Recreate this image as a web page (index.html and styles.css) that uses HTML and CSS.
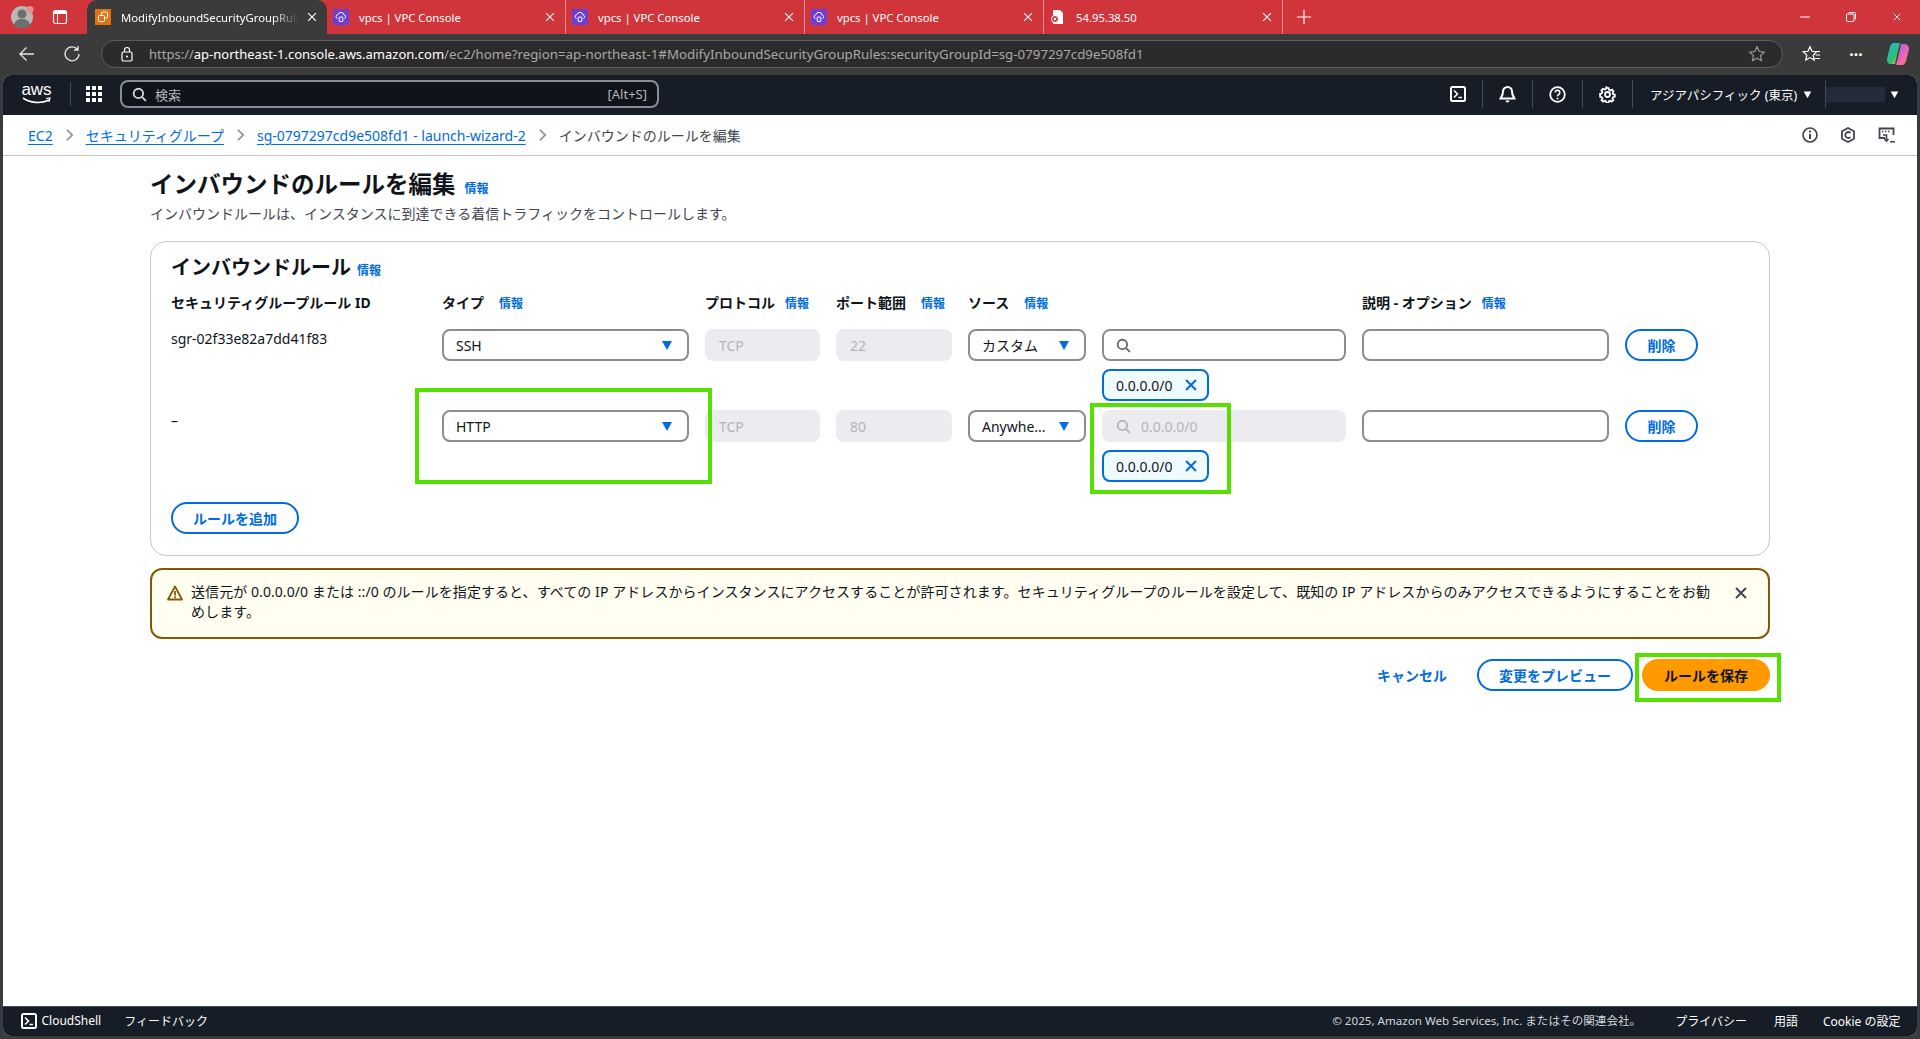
FILE: index.html
```html
<!DOCTYPE html>
<html lang="ja">
  <head>
    <meta charset="UTF-8" />
    <meta name="viewport" content="width=device-width, initial-scale=1.0" />
    <title>ModifyInboundSecurityGroupRules</title>
    <link rel="stylesheet" href="styles.css">
  </head>
  <body>
    <svg class="icon-defs" width="0" height="0">
      <symbol id="i-close" viewBox="0 0 16 16"><path d="M3 3l10 10M13 3L3 13" fill="none" stroke="currentColor" stroke-width="2"/></symbol>
      <symbol id="i-thin-close" viewBox="0 0 16 16"><path d="M3.5 3.5l9 9M12.5 3.5l-9 9" fill="none" stroke="currentColor" stroke-width="1.2"/></symbol>
      <symbol id="i-search" viewBox="0 0 16 16"><circle cx="6.8" cy="6.8" r="5" fill="none" stroke="currentColor" stroke-width="2"/><path d="M10.5 10.5l4.3 4.3" fill="none" stroke="currentColor" stroke-width="2"/></symbol>
      <symbol id="i-caret" viewBox="0 0 12 12"><path d="M1 2h10L6 11z" fill="currentColor"/></symbol>
      <symbol id="i-chev" viewBox="0 0 10 16"><path d="M2 2l6 6-6 6" fill="none" stroke="currentColor" stroke-width="2"/></symbol>
      <symbol id="i-shell" viewBox="0 0 16 16"><rect x="1" y="1" width="14" height="14" rx="1.5" fill="none" stroke="currentColor" stroke-width="2"/><path d="M4 4.5L7.5 8 4 11.5M8.5 11.5H12" fill="none" stroke="currentColor" stroke-width="1.6"/></symbol>
      <symbol id="i-vpc" viewBox="0 0 16 16"><rect width="16" height="16" rx="1" fill="#6b3fd4"/><path d="M4.5 9.5a2 2 0 0 1 .4-3.9 3.2 3.2 0 0 1 6.2.4 1.8 1.8 0 0 1 .2 3.5" fill="none" stroke="#fff" stroke-width="1"/><rect x="6.2" y="8" width="3.6" height="4.5" rx=".5" fill="none" stroke="#fff" stroke-width="1"/></symbol>
    </svg>

    <div class="tabbar">
      <div class="profile">
        <svg width="24" height="24" viewBox="0 0 24 24"><circle cx="11" cy="12" r="11" fill="#b8b8b8"/><circle cx="11" cy="9" r="4.5" fill="#6e6e6e"/><path d="M3 20c1-5 5-6 8-6s7 1 8 6a11 11 0 0 1-16 0z" fill="#6e6e6e"/><circle cx="19" cy="4.5" r="3.5" fill="#e8908f"/></svg>
      </div>
      <div class="vtabs">
        <svg width="16" height="16" viewBox="0 0 16 16"><rect x="1.5" y="1.5" width="13" height="13" rx="2" fill="none" stroke="#fff" stroke-width="1.2"/><path d="M1.5 5h13V3.5a2 2 0 0 0-2-2h-9a2 2 0 0 0-2 2z" fill="#fff"/><path d="M5.5 5v9.5" stroke="#fff"/></svg>
      </div>
      <div class="tab tab-active">
        <svg class="favicon" width="16" height="16" viewBox="0 0 16 16"><rect width="16" height="16" fill="#e07314"/><rect x="6.5" y="3" width="6" height="6" rx="1" fill="none" stroke="#fff"/><rect x="3.5" y="6.5" width="6" height="6" rx="1" fill="#e07314" stroke="#fff"/></svg>
        <span class="tab-title tab-fade">ModifyInboundSecurityGroupRules</span>
        <svg class="tab-close" width="14" height="14"><use href="#i-thin-close"/></svg>
      </div>
      <div class="tab">
        <svg class="favicon" width="16" height="16"><use href="#i-vpc"/></svg>
        <span class="tab-title">vpcs | VPC Console</span>
        <svg class="tab-close" width="14" height="14"><use href="#i-thin-close"/></svg>
      </div>
      <div class="tab">
        <svg class="favicon" width="16" height="16"><use href="#i-vpc"/></svg>
        <span class="tab-title">vpcs | VPC Console</span>
        <svg class="tab-close" width="14" height="14"><use href="#i-thin-close"/></svg>
      </div>
      <div class="tab">
        <svg class="favicon" width="16" height="16"><use href="#i-vpc"/></svg>
        <span class="tab-title">vpcs | VPC Console</span>
        <svg class="tab-close" width="14" height="14"><use href="#i-thin-close"/></svg>
      </div>
      <div class="tab tab-last">
        <svg class="favicon" width="16" height="16" viewBox="0 0 16 16"><path d="M3 1h7l3 3v11H3z" fill="#fff"/><circle cx="5" cy="10" r="3.5" fill="#d0353b" stroke="#fff"/><path d="M3.8 8.8l2.4 2.4M6.2 8.8l-2.4 2.4" stroke="#fff"/></svg>
        <span class="tab-title">54.95.38.50</span>
        <svg class="tab-close" width="14" height="14"><use href="#i-thin-close"/></svg>
      </div>
      <svg class="new-tab" width="16" height="16" viewBox="0 0 16 16"><path d="M8 1v14M1 8h14" stroke="#fff" stroke-width="1.2"/></svg>
      <div class="win-controls">
        <svg width="12" height="12" viewBox="0 0 12 12"><path d="M1 6h10" stroke="#fff"/></svg>
        <svg width="12" height="12" viewBox="0 0 12 12"><rect x="1.5" y="3" width="7.5" height="7.5" rx="1" fill="none" stroke="#fff"/><path d="M3.5 1.5h6a1 1 0 0 1 1 1v6" fill="none" stroke="#fff"/></svg>
        <svg width="12" height="12"><use href="#i-thin-close" color="#fff"/></svg>
      </div>
    </div>

    <div class="toolbar">
      <svg class="tb-back" width="18" height="18" viewBox="0 0 18 18"><path d="M16 9H2M8.5 2.500L2 9l6.500 6.500" fill="none" stroke="#e6e6e6" stroke-width="1.300"/></svg>
      <svg class="tb-reload" width="18" height="18" viewBox="0 0 18 18"><path d="M14.500 4.500A7 7 0 1 0 16 9M15 1v4h-4" fill="none" stroke="#e6e6e6" stroke-width="1.300"/></svg>
      <div class="addressbar">
        <svg class="lock" width="14" height="16" viewBox="0 0 14 16"><rect x="2" y="6" width="10" height="9" rx="1.500" fill="none" stroke="#fff" stroke-width="1.200"/><path d="M4.500 6V4a2.500 2.500 0 0 1 5 0v2" fill="none" stroke="#fff" stroke-width="1.200"/><circle cx="7" cy="10.500" r="1" fill="#fff"/></svg>
        <div class="url"><span class="url-dim">https://</span><span class="url-host">ap-northeast-1.console.aws.amazon.com</span><span class="url-dim url-path">/ec2/home?region=ap-northeast-1#ModifyInboundSecurityGroupRules:securityGroupId=sg-0797297cd9e508fd1</span></div>
        <svg class="star" width="18" height="18" viewBox="0 0 18 18"><path d="M9 1.800l2.200 4.700 5 .6-3.700 3.500 1 5.100L9 13.200l-4.500 2.500 1-5.100L1.800 7.100l5-.6z" fill="none" stroke="#9a9a9a" stroke-width="1.200"/></svg>
      </div>
      <svg class="tb-fav" width="20" height="18" viewBox="0 0 20 18"><path d="M8 1.800l2 4.500 4.800.5-3.600 3.300 1 4.900L8 12.600l-4.200 2.400 1-4.900L1.200 6.800 6 6.300z" fill="none" stroke="#fff" stroke-width="1.200"/><path d="M13 6.500h5M13.500 10h4.500M12.500 13.500H18" stroke="#fff"/></svg>
      <span class="tb-dots">···</span>
      <svg class="tb-copilot" width="24" height="24" viewBox="0 0 24 24">
        <defs>
          <linearGradient id="cp1" x1="0" y1="0" x2="1" y2="1"><stop offset="0" stop-color="#1fb6e8"/><stop offset=".6" stop-color="#2fbf71"/><stop offset="1" stop-color="#f5c518"/></linearGradient>
          <linearGradient id="cp2" x1="0" y1="0" x2="1" y2="1"><stop offset="0" stop-color="#9b5cf0"/><stop offset=".6" stop-color="#f065b0"/><stop offset="1" stop-color="#ff8a3c"/></linearGradient>
        </defs>
        <path d="M8 1h6l-3 12-2 9H5C2 22 1 20 1 17l3-12c.5-2.500 2-4 4-4z" fill="url(#cp1)"/>
        <path d="M15 2h3c3 0 5 2 5 5l-3 12c-.5 2-2 4-4 4h-6l3-12z" fill="url(#cp2)"/>
      </svg>
    </div>

    <div class="console">
      <header class="awsbar">
        <div class="aws-logo">
          <span class="aws-word">aws</span>
          <svg width="30" height="8" viewBox="0 0 30 8"><path d="M1 1c7 5 18 6 26 2" fill="none" stroke="#fff" stroke-width="1.600"/><path d="M24 1.500l4-.5-1 4" fill="none" stroke="#fff" stroke-width="1.200"/></svg>
        </div>
        <span class="awsbar-sep"></span>
        <svg class="apps" width="16" height="16" viewBox="0 0 16 16" fill="#fff"><rect width="4" height="4"/><rect x="6" width="4" height="4"/><rect x="12" width="4" height="4"/><rect y="6" width="4" height="4"/><rect x="6" y="6" width="4" height="4"/><rect x="12" y="6" width="4" height="4"/><rect y="12" width="4" height="4"/><rect x="6" y="12" width="4" height="4"/><rect x="12" y="12" width="4" height="4"/></svg>
        <div class="aws-search">
          <svg width="15" height="15" color="#d1d5db"><use href="#i-search"/></svg>
          <span class="aws-search-text">検索</span>
          <span class="aws-search-key">[Alt+S]</span>
        </div>
        <div class="aws-right">
          <span class="aws-icon"><svg width="16" height="16"><use href="#i-shell"/></svg></span>
          <span class="aws-icon"><svg width="17" height="18" viewBox="0 0 17 18"><path d="M8.500 2a4.500 4.500 0 0 0-4.500 4.500c0 4-2 5.500-2.500 7h14c-.5-1.500-2.500-3-2.500-7A4.500 4.500 0 0 0 8.500 2z" fill="none" stroke="currentColor" stroke-width="2"/><path d="M6.500 15.500a2 2 0 0 0 4 0" fill="currentColor"/></svg></span>
          <span class="aws-icon"><svg width="17" height="17" viewBox="0 0 17 17"><circle cx="8.500" cy="8.500" r="7.300" fill="none" stroke="currentColor" stroke-width="1.800"/><path d="M6.200 6.500a2.300 2.300 0 1 1 3.500 2c-.9.500-1.200 1-1.200 1.800" fill="none" stroke="currentColor" stroke-width="1.600"/><circle cx="8.500" cy="12.500" r="1" fill="currentColor"/></svg></span>
          <span class="aws-icon"><svg width="17" height="17" viewBox="0 0 17 17"><path d="M8.500 1.200l1.300.1.500 2 1.600.7 1.800-1 1.700 1.900-1.100 1.700.6 1.600 2 .5-.1 2.400-2 .5-.7 1.600 1.100 1.700-1.800 1.700-1.700-1.100-1.600.7-.5 1.900H7.300l-.5-1.900-1.600-.7-1.700 1.100-1.800-1.700 1.100-1.700-.7-1.600-2-.5V7.700l2-.5.6-1.600-1.100-1.700 1.700-1.900 1.800 1 1.600-.7.500-2z" transform="translate(1 1) scale(.88)" fill="none" stroke="currentColor" stroke-width="2"/><circle cx="8.500" cy="8.500" r="2.500" fill="none" stroke="currentColor" stroke-width="1.800"/></svg></span>
          <span class="aws-region">アジアパシフィック (東京)<svg width="9" height="9" color="#fff"><use href="#i-caret"/></svg></span>
          <span class="aws-account"><span class="account-blur"></span><svg width="9" height="9" color="#fff"><use href="#i-caret"/></svg></span>
        </div>
      </header>

      <nav class="crumbs">
        <a class="crumb-link">EC2</a>
        <svg class="crumb-chev" width="9" height="14"><use href="#i-chev"/></svg>
        <a class="crumb-link">セキュリティグループ</a>
        <svg class="crumb-chev" width="9" height="14"><use href="#i-chev"/></svg>
        <a class="crumb-link">sg-0797297cd9e508fd1 - launch-wizard-2</a>
        <svg class="crumb-chev" width="9" height="14"><use href="#i-chev"/></svg>
        <span class="crumb-current">インバウンドのルールを編集</span>
        <div class="crumb-tools">
          <svg width="16" height="16" viewBox="0 0 16 16"><circle cx="8" cy="8" r="7" fill="none" stroke="currentColor" stroke-width="1.700"/><path d="M8 7v5" stroke="currentColor" stroke-width="2"/><rect x="7" y="3.500" width="2" height="2" fill="currentColor"/></svg>
          <svg width="16" height="16" viewBox="0 0 16 16"><path d="M8 1l6 3.300v7.400L8 15l-6-3.300V4.300z" fill="none" stroke="currentColor" stroke-width="1.800"/><path d="M10.500 6A3 3 0 1 0 10.500 10" fill="none" stroke="currentColor" stroke-width="1.800"/></svg>
          <svg width="18" height="16" viewBox="0 0 18 16"><path d="M7 11H1.500V1.500h14V8" fill="none" stroke="currentColor" stroke-width="1.800"/><path d="M4 4.500h1.500M7 4.500h1.500M10 4.500h1.500" stroke="currentColor" stroke-width="1.600"/><path d="M5 8h3.500v6M6.500 12l2 2 2-2M12 14.800h5" fill="none" stroke="currentColor" stroke-width="1.600"/></svg>
        </div>
      </nav>

      <main class="content">
        <div class="page-head">
          <h1 class="page-title">インバウンドのルールを編集<a class="info info-title">情報</a></h1>
          <p class="page-desc">インバウンドルールは、インスタンスに到達できる着信トラフィックをコントロールします。</p>
        </div>

        <section class="card">
          <h2 class="card-title">インバウンドルール<a class="info info-card">情報</a></h2>

          <div class="rule-grid rule-head">
            <div>セキュリティグループルール ID</div>
            <div>タイプ<a class="info info-wide">情報</a></div>
            <div>プロトコル<a class="info">情報</a></div>
            <div>ポート範囲<a class="info info-wide">情報</a></div>
            <div>ソース<a class="info info-wide">情報</a></div>
            <div></div>
            <div>説明 - オプション<a class="info">情報</a></div>
            <div></div>
          </div>

          <div class="rule-grid rule-row">
            <div class="rule-id">sgr-02f33e82a7dd41f83</div>
            <div class="select">SSH<svg width="12" height="12"><use href="#i-caret"/></svg></div>
            <div class="input input-off">TCP</div>
            <div class="input input-off">22</div>
            <div class="select select-src">カスタム<svg width="12" height="12"><use href="#i-caret"/></svg></div>
            <div class="cidr">
              <div class="input input-search"><svg width="15" height="15"><use href="#i-search"/></svg></div>
              <div class="chip">0.0.0.0/0<svg width="16" height="16"><use href="#i-close"/></svg></div>
            </div>
            <div class="input"></div>
            <button class="btn">削除</button>
          </div>

          <div class="rule-grid rule-row">
            <div class="rule-id rule-id-new">–</div>
            <div class="select">HTTP<svg width="12" height="12"><use href="#i-caret"/></svg></div>
            <div class="input input-off">TCP</div>
            <div class="input input-off">80</div>
            <div class="select select-src">Anywhe...<svg width="12" height="12"><use href="#i-caret"/></svg></div>
            <div class="cidr">
              <div class="input input-off input-search"><svg width="15" height="15"><use href="#i-search"/></svg>0.0.0.0/0</div>
              <div class="chip">0.0.0.0/0<svg width="16" height="16"><use href="#i-close"/></svg></div>
            </div>
            <div class="input"></div>
            <button class="btn">削除</button>
          </div>

          <button class="btn btn-add">ルールを追加</button>
        </section>

        <div class="alert">
          <svg class="alert-icon" width="16" height="16" viewBox="0 0 16 16"><path d="M8 1.500L15 14.500H1z" fill="none" stroke="#855900" stroke-width="1.800" stroke-linejoin="round"/><path d="M8 6v4.500" stroke="#855900" stroke-width="1.800"/><rect x="7.100" y="11.300" width="1.800" height="1.800" fill="#855900"/></svg>
          <p class="alert-text">送信元が 0.0.0.0/0 または ::/0 のルールを指定すると、すべての IP アドレスからインスタンスにアクセスすることが許可されます。セキュリティグループのルールを設定して、既知の IP アドレスからのみアクセスできるようにすることをお勧めします。</p>
          <svg class="alert-close" width="16" height="16"><use href="#i-close"/></svg>
        </div>

        <div class="actions">
          <a class="cancel">キャンセル</a>
          <button class="btn btn-preview">変更をプレビュー</button>
          <button class="btn btn-primary">ルールを保存</button>
        </div>
      </main>

      <footer class="awsfoot">
        <svg width="16" height="16" color="#fff"><use href="#i-shell"/></svg>
        <span class="foot-shell">CloudShell</span>
        <span class="foot-fb">フィードバック</span>
        <div class="foot-right">
          <span class="foot-copy">© 2025, Amazon Web Services, Inc. またはその関連会社。</span>
          <span class="foot-privacy">プライバシー</span>
          <span>用語</span>
          <span>Cookie の設定</span>
        </div>
      </footer>

      <!-- annotation boxes drawn over the screenshot -->
      <div class="mark mark-type"></div>
      <div class="mark mark-cidr"></div>
      <div class="mark mark-save"></div>
    </div>
  </body>
</html>
```

FILE: styles.css
```css
* {
  box-sizing: border-box;
}
html,
body {
  margin: 0;
  height: 100%;
}
body {
  width: 1920px;
  height: 1039px;
  overflow: hidden;
  display: flex;
  flex-direction: column;
  background-color: #3b3b3b;
  font-family: "Noto Sans", "Noto Sans CJK JP", sans-serif;
  font-size: 14px;
  color: #0f141a;
}
.icon-defs {
  position: absolute;
}
a {
  color: #006ce0;
}
button {
  font-family: inherit;
}

/* browser tabs */
.tabbar {
  height: 34px;
  flex: none;
  display: flex;
  align-items: center;
  background-color: #d0353b;
  color: #fff;
  font-size: 11.3px;
}
.profile {
  width: 44px;
  padding-left: 11px;
  display: flex;
}
.vtabs {
  width: 43px;
  padding-left: 8px;
  display: flex;
}
.tab {
  width: 239px;
  height: 34px;
  padding: 0 8px 0 6px;
  display: flex;
  align-items: center;
  border-right: 1px solid #e58a8d;
}
.tab-active {
  width: 240px;
  padding-left: 8px;
  background-color: #3b3b3b;
  border-right: none;
  border-radius: 10px 10px 0 0;
}
.tab-last {
  border-right: 1px solid #e58a8d;
}
.favicon {
  flex: none;
}
.tab-title {
  flex: 1;
  margin-left: 10px;
  white-space: nowrap;
  overflow: hidden;
}
.tab-fade {
  -webkit-mask-image: linear-gradient(to right, #000 85%, transparent 100%);
  mask-image: linear-gradient(to right, #000 85%, transparent 100%);
}
.tab-close {
  flex: none;
  margin-left: 6px;
}
.new-tab {
  margin-left: 13px;
}
.win-controls {
  margin-left: auto;
  padding-right: 17px;
  display: flex;
  gap: 34px;
}

/* browser toolbar */
.toolbar {
  height: 41px;
  flex: none;
  padding-bottom: 2px;
  display: flex;
  align-items: center;
}
.tb-back {
  margin-left: 18px;
}
.tb-reload {
  margin-left: 27px;
}
.addressbar {
  width: 1682px;
  height: 28px;
  margin-left: 20px;
  padding: 0 16px 0 18px;
  display: flex;
  align-items: center;
  background-color: #2b2b2b;
  border: 1px solid #5c5c5c;
  border-radius: 14px;
}
.url {
  flex: 1;
  margin-left: 15px;
  font-size: 13px;
  white-space: nowrap;
  overflow: hidden;
}
.url-dim {
  color: #a8a8a8;
}
.url-path {
  font-size: 13.3px;
}
.url-host {
  color: #fff;
}
.tb-fav {
  margin-left: 19px;
}
.tb-dots {
  margin-left: 24px;
  width: 20px;
  color: #fff;
  font-size: 16px;
  font-weight: bold;
  text-align: center;
}
.tb-copilot {
  margin-left: 20px;
}

/* aws console */
.console {
  flex: 1;
  margin: 0 3px 3px;
  display: flex;
  flex-direction: column;
  position: relative;
  background-color: #fff;
  border-radius: 8px;
  overflow: hidden;
}
.awsbar {
  height: 40px;
  flex: none;
  padding: 0 0 2px 18px;
  display: flex;
  align-items: center;
  background-color: #161d26;
  color: #fff;
}
.aws-logo {
  width: 31px;
  display: flex;
  flex-direction: column;
  align-items: center;
}
.aws-word {
  height: 13px;
  font-family: "Liberation Sans", sans-serif;
  font-size: 17px;
  line-height: 12px;
}
.awsbar-sep {
  width: 1px;
  height: 24px;
  margin-left: 18px;
  background-color: #414d5c;
}
.apps {
  margin-left: 15px;
}
.aws-search {
  width: 539px;
  height: 28px;
  margin-left: 18px;
  padding: 0 10px;
  display: flex;
  align-items: center;
  background-color: #0f141a;
  border: 2px solid #8c8c94;
  border-radius: 8px;
  font-size: 13px;
  color: #b4b4bb;
}
.aws-search-text {
  margin-left: 8px;
}
.aws-search-key {
  margin-left: auto;
}
.aws-right {
  margin-left: auto;
  padding-right: 10px;
  display: flex;
  align-items: center;
  height: 100%;
}
.aws-icon {
  width: 50px;
  height: 28px;
  display: flex;
  align-items: center;
  justify-content: center;
  border-right: 1px solid #414d5c;
}
.aws-region {
  width: 193px;
  height: 28px;
  padding-left: 17px;
  display: flex;
  align-items: center;
  gap: 6px;
  border-right: 1px solid #414d5c;
  font-size: 12.5px;
  white-space: nowrap;
}
.aws-account {
  width: 81px;
  display: flex;
  align-items: center;
  gap: 5px;
}
.account-blur {
  width: 59px;
  height: 15px;
  background-color: #232c38;
}
.crumbs {
  height: 41px;
  flex: none;
  padding: 0 21px 0 25px;
  display: flex;
  align-items: center;
  gap: 10px;
  border-bottom: 1px solid #c6c6cd;
}
.crumb-link {
  text-decoration: underline;
  text-underline-offset: 3px;
}
.crumb-chev {
  color: #8c8c94;
  margin: 0 2px;
}
.crumb-current {
  color: #424650;
}
.crumb-tools {
  margin-left: auto;
  display: flex;
  align-items: center;
  gap: 22px;
  color: #424650;
}

/* page content */
.content {
  flex: 1;
  width: 1767px;
  padding-left: 147px;
}
.page-head {
  padding-top: 13px;
}
.page-title {
  margin: 0;
  font-size: 23.5px;
  line-height: 30px;
  font-weight: bold;
}
.page-desc {
  margin: 0;
  line-height: 20px;
  color: #424650;
}
.info {
  font-size: 12px;
  font-weight: bold;
  margin-left: 10px;
}
.info-title {
  margin-left: 9px;
}
.info-card {
  margin-left: 6px;
}
.info-wide {
  margin-left: 15px;
}
.card {
  margin-top: 17px;
  padding: 14px 19px 21px 20px;
  border: 1px solid #c6c6cd;
  border-radius: 16px;
}
.card-title {
  margin: 0;
  font-size: 20px;
  line-height: 24px;
  font-weight: bold;
}
.rule-grid {
  display: grid;
  grid-template-columns: 255px 247px 115px 116px 118px 244px 247px 73px;
  column-gap: 16px;
}
.rule-head {
  margin-top: 10px;
  line-height: 20px;
  font-weight: bold;
  white-space: nowrap;
}
.rule-row {
  margin-bottom: 9px;
  align-items: start;
}
.rule-head + .rule-row {
  margin-top: 15px;
}
.rule-id {
  line-height: 20px;
}
.rule-id-new {
  padding-top: 1px;
}
.select,
.input {
  height: 32px;
  padding: 0 12px;
  display: flex;
  align-items: center;
  background-color: #fff;
  border: 2px solid #8c8c94;
  border-radius: 8px;
}
.select svg {
  margin-left: auto;
  color: #006ce0;
}
.select {
  padding-right: 14px;
}
.input-off {
  background-color: #ebebf0;
  border-color: #ebebf0;
  color: #b4b4bb;
}
.input-search {
  gap: 10px;
  color: #656871;
}
.input-off.input-search {
  color: #b4b4bb;
}
.cidr {
  display: flex;
  flex-direction: column;
  align-items: flex-start;
  gap: 8px;
}
.cidr .input {
  width: 100%;
}
.chip {
  width: 107px;
  height: 32px;
  padding: 0 8px 0 12px;
  display: flex;
  align-items: center;
  justify-content: space-between;
  background-color: #f0fbff;
  border: 2px solid #006ce0;
  border-radius: 8px;
}
.chip svg {
  color: #006ce0;
}
.btn {
  height: 32px;
  padding: 0 20px;
  background-color: #fff;
  border: 2px solid #006ce0;
  border-radius: 16px;
  color: #006ce0;
  font-size: 14px;
  font-weight: bold;
  white-space: nowrap;
  cursor: pointer;
}
.btn-add {
  display: block;
  margin-top: 20px;
  width: 128px;
}
.alert {
  margin-top: 12px;
  height: 71px;
  padding: 12px 19px 0 15px;
  display: flex;
  align-items: flex-start;
  background-color: #fffef0;
  border: 2px solid #855900;
  border-radius: 12px;
}
.alert-icon {
  flex: none;
  margin-top: 3px;
}
.alert-text {
  margin: 0 0 0 8px;
  width: 1530px;
  line-height: 20px;
  letter-spacing: .07px;
}
.alert-close {
  flex: none;
  margin-left: 17px;
  margin-top: 3px;
  color: #424650;
}
.actions {
  margin-top: 20px;
  display: flex;
  justify-content: flex-end;
  align-items: center;
}
.cancel {
  margin-right: 30px;
  font-weight: bold;
}
.btn-preview {
  width: 156px;
}
.btn-primary {
  width: 128px;
  margin-left: 9px;
  background-color: #ff9900;
  border-color: #ff9900;
  color: #0f141a;
}
.awsfoot {
  height: 30px;
  flex: none;
  padding: 0 16.500px 2px 17.500px;
  display: flex;
  align-items: center;
  background-color: #161d26;
  color: #fff;
  font-size: 12px;
  border-top: 1px solid #414d5c;
}
.foot-shell {
  margin-left: 5px;
}
.foot-fb {
  margin-left: 23px;
}
.foot-right {
  margin-left: auto;
  display: flex;
  gap: 25px;
}
.foot-copy {
  color: #d1d5db;
  margin-right: 9px;
  font-size: 11.6px;
}
.foot-privacy {
  margin-right: 2px;
}

/* green annotation rectangles, coordinates relative to .console */
.mark {
  position: absolute;
  border: 4px solid #55e000;
}
.mark-type {
  left: 412px;
  top: 313px;
  width: 297px;
  height: 96px;
}
.mark-cidr {
  left: 1087px;
  top: 328px;
  width: 141px;
  height: 91px;
}
.mark-save {
  left: 1632px;
  top: 578px;
  width: 146px;
  height: 49px;
}
```
